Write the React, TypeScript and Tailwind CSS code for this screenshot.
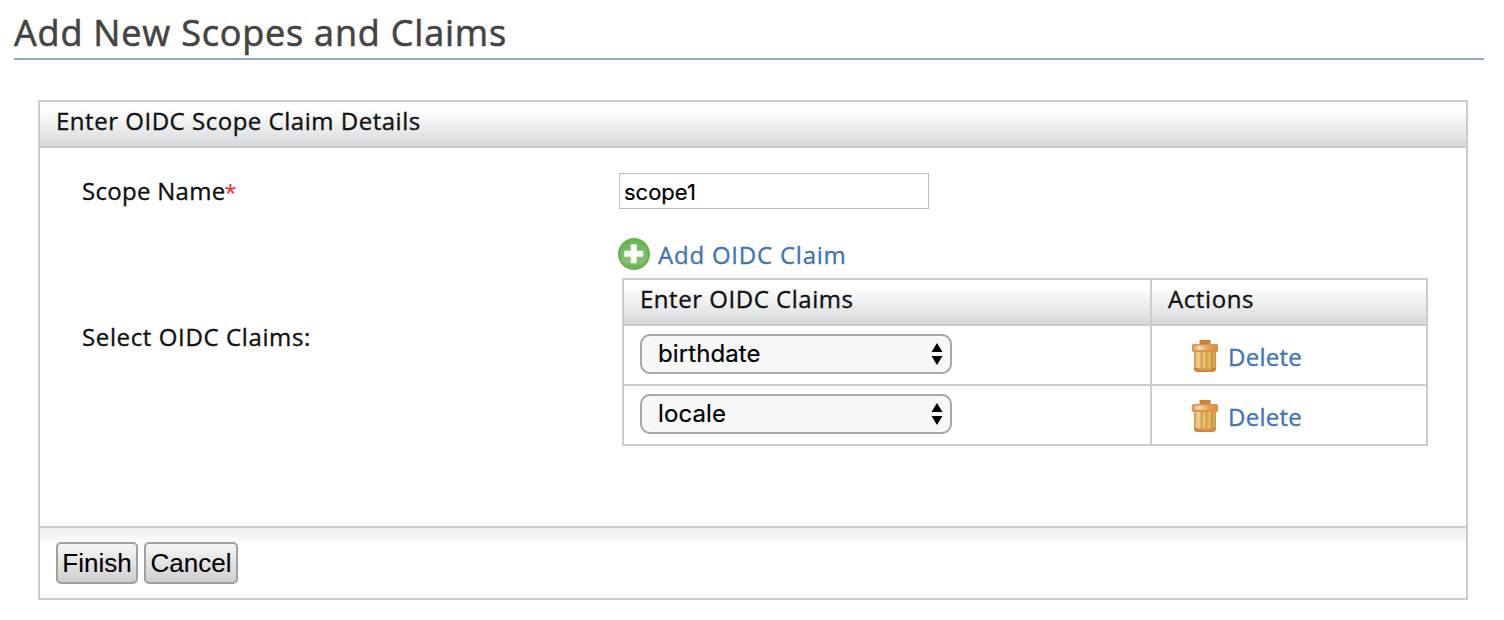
import { useState } from "react";

const ROWS = ["birthdate", "locale"];

function PlusIcon() {
  return (
    <svg width="32" height="32" viewBox="0 0 32 32" className="block shrink-0">
      <defs>
        <linearGradient id="plus-fill" x1="0" y1="0" x2="0" y2="1">
          <stop offset="0" stopColor="#69b54f" />
          <stop offset="0.5" stopColor="#7dbb6a" />
          <stop offset="0.78" stopColor="#86bf76" />
          <stop offset="1" stopColor="#67b44d" />
        </linearGradient>
      </defs>
      <circle cx="16" cy="16" r="16" fill="#68b34f" />
      <circle cx="16" cy="16" r="13.6" fill="url(#plus-fill)" />
      <path d="M13 6.5h5.500V13h6.500v5.500h-6.500v6.500H13v-6.500H6.500V13H13z" fill="#fff" stroke="#d5ead0" strokeWidth="1" strokeLinejoin="round" />
    </svg>
  );
}

function TrashIcon() {
  return (
    <svg width="28" height="32" viewBox="0 0 28 32" className="block shrink-0">
      <defs>
        <linearGradient id="bin-body" x1="0" y1="0" x2="1" y2="0">
          <stop offset="0" stopColor="#d28e45" />
          <stop offset="0.14" stopColor="#efc884" />
          <stop offset="0.26" stopColor="#f0cf92" />
          <stop offset="0.34" stopColor="#d39a4c" />
          <stop offset="0.46" stopColor="#edc873" />
          <stop offset="0.58" stopColor="#d09c4b" />
          <stop offset="0.7" stopColor="#e6c267" />
          <stop offset="0.82" stopColor="#c98f42" />
          <stop offset="0.9" stopColor="#ddb45c" />
          <stop offset="1" stopColor="#cf873f" />
        </linearGradient>
        <linearGradient id="bin-lid" x1="0" y1="0" x2="1" y2="0">
          <stop offset="0" stopColor="#e2a465" />
          <stop offset="0.25" stopColor="#f5d6b0" />
          <stop offset="0.6" stopColor="#e5a766" />
          <stop offset="1" stopColor="#db8b3e" />
        </linearGradient>
      </defs>
      <path d="M3 11h22v17q0 4-4 4H7q-4 0-4-4z" fill="url(#bin-body)" />
      <path d="M3 28h22q0 4-4 4H7q-4 0-4-4z" fill="#cd843f" />
      <path d="M7 29h14" stroke="#dda35a" strokeWidth="1.500" />
      <path d="M8.500 0h11v5h-11z" fill="#cd8038" />
      <rect x="1" y="4" width="26" height="8" rx="1.500" fill="#d9934d" />
      <rect x="2.500" y="5.500" width="23" height="4.500" rx="1" fill="url(#bin-lid)" />
    </svg>
  );
}

function ClaimSelect({ initial }: { initial: string }) {
  const [value, setValue] = useState(initial);
  return (
    <div className="relative h-10 w-[312px]">
      <select
        value={value}
        onChange={(e) => setValue(e.target.value)}
        className="block h-10 w-[312px] appearance-none rounded-[10px] border-2 border-[#a6a6a6] bg-[#f7f7f7] pl-4 font-['Inter',sans-serif] text-[24px] leading-[34px] font-normal tracking-[0.1px] text-black outline-none [-webkit-text-stroke:0.2px]"
      >
        {ROWS.map((c) => (
          <option key={c}>{c}</option>
        ))}
      </select>
      <svg width="12" height="22" viewBox="0 0 12 22" className="pointer-events-none absolute top-[9px] right-[9.5px]">
        <path d="M6 0l5.500 9H.5zM6 22l5.500-9H.5z" fill="#000" />
      </svg>
    </div>
  );
}

export default function App() {
  const [scope, setScope] = useState("scope1");
  return (
    <div className="h-[620px] w-[1504px] overflow-hidden bg-white font-['Open_Sans',sans-serif] text-[24px] leading-[32px] text-[#111] [-webkit-text-stroke:0.35px]">
      <div className="mx-[14px] mr-5 h-[60px] border-b-2 border-[#94a6cc] pt-[9px]">
        <h1 className="text-[36px] leading-[48px] font-normal tracking-[0.8px] whitespace-nowrap text-[#444] [-webkit-text-stroke:0.6px]">
          <span>Add New Scopes and Claims</span>
        </h1>
      </div>

      <div className="mt-10 ml-[38px] flex h-[500px] w-[1430px] flex-col border-2 border-[#ccc]">
        <div className="h-[46px] border-b-2 border-[#ccc] bg-linear-to-b from-white from-15% via-[#eff0f0] via-50% to-[#d8d9db] pt-[3px] pl-4">
          <span className="tracking-[0.52px]">Enter OIDC Scope Claim Details</span>
        </div>

        <div className="flex h-[378px] pl-[42px]">
          <div className="w-[536px] pt-[27px]">
            <div className="h-[146px]">
              <span className="tracking-[0.28px]">Scope Name</span>
              <span className="ml-[-1px] text-[22px] text-[#f22] [-webkit-text-stroke:0px]">*</span>
            </div>
            <div>
              <span className="tracking-[0.62px]">Select OIDC Claims:</span>
            </div>
          </div>

          <div className="pt-[25px]">
            <input
              value={scope}
              onChange={(e) => setScope(e.target.value)}
              className="ml-[1px] block h-9 w-[310px] border border-[#bbb] bg-white px-[4px] pt-[2px] font-['Inter',sans-serif] text-[22px] leading-[32px] font-normal text-black outline-none [-webkit-text-stroke:0.2px]"
            />
            <a className="mt-[29px] flex h-8 cursor-pointer gap-2 text-[#3f75b9]">
              <PlusIcon />
              <span className="pt-[1px] tracking-[0.78px]">Add OIDC Claim</span>
            </a>

            <div className="mt-2 ml-1 grid w-[806px] grid-cols-[526px_274px] gap-[2px] border-2 border-[#ccc] bg-[#ccc]">
              <div className="h-11 bg-linear-to-b from-white from-15% via-[#eff0f0] via-50% to-[#d8d9db] pt-[3px] pl-4">
                <span className="tracking-[0.53px]">Enter OIDC Claims</span>
              </div>
              <div className="h-11 bg-linear-to-b from-white from-15% via-[#eff0f0] via-50% to-[#d8d9db] pt-[3px] pl-4">
                <span className="tracking-[0.6px]">Actions</span>
              </div>
              {ROWS.map((claim) => (
                <div key={claim} className="contents">
                  <div className="h-[58px] bg-white pt-2 pl-4">
                    <ClaimSelect initial={claim} />
                  </div>
                  <div className="h-[58px] bg-white pt-[14px] pl-[39px]">
                    <a className="flex h-8 cursor-pointer gap-[9px] text-[#3f75b9]">
                      <TrashIcon />
                      <span className="pt-[1px] tracking-[0.25px]">Delete</span>
                    </a>
                  </div>
                </div>
              ))}
            </div>
          </div>
        </div>

        <div className="flex h-[72px] gap-[6px] border-t-2 border-[#ccc] bg-linear-to-b from-[#ededed] to-white to-25% pt-[14px] pl-4 font-['Liberation_Sans',sans-serif] text-[26px] leading-[38px] text-black [-webkit-text-stroke:0.1px]">
          <button className="h-[42px] w-[82px] rounded-[5px] border-2 border-[#a0a0a0] bg-linear-to-b from-[#f6f6f6] to-[#cfcfcf] whitespace-nowrap">
            Finish
          </button>
          <button className="h-[42px] w-[94px] rounded-[5px] border-2 border-[#a0a0a0] bg-linear-to-b from-[#f6f6f6] to-[#cfcfcf] whitespace-nowrap">
            Cancel
          </button>
        </div>
      </div>
    </div>
  );
}
